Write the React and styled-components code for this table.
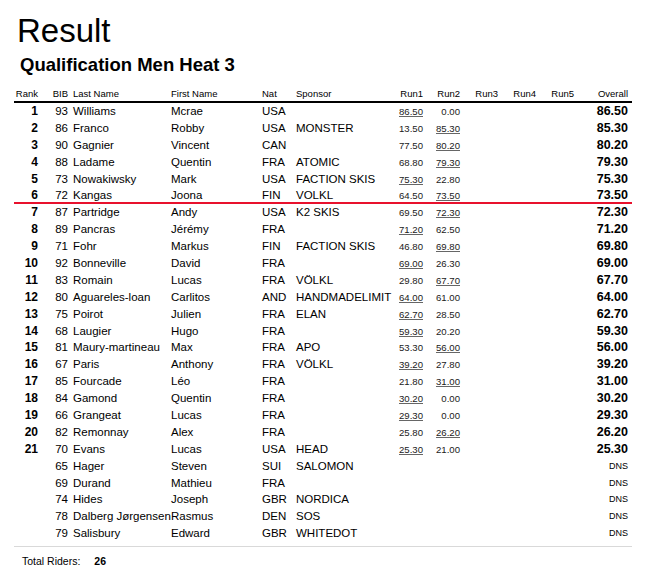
import React from 'react';
import styled, { createGlobalStyle } from 'styled-components';

const GlobalStyle = createGlobalStyle`
  html, body {
    margin: 0;
    padding: 0;
    background: #ffffff;
    color: #000000;
    font-family: 'Liberation Sans', Arial, Helvetica, sans-serif;
  }
`;

const COLS = '26px 30px 100px 90px 34px 102px 29px 37px 38px 38px 38px 56px';

const Page = styled.div`
  width: 655px;
  padding: 14px 0 0 14px;
  box-sizing: border-box;
`;

const Title = styled.h1`
  margin: 0 0 0 3px;
  font-size: 33px;
  line-height: 33px;
  font-weight: 400;
`;

const SubTitle = styled.h2`
  margin: 8px 0 0 6px;
  font-size: 18.5px;
  line-height: 20px;
  font-weight: 700;
`;

const Table = styled.div`
  width: 618px;
  margin-top: 13px;
  padding-bottom: 4px;
  border-bottom: 1px solid #d9d9d9;
`;

const HeadRow = styled.div`
  display: grid;
  grid-template-columns: ${COLS};
  height: 13px;
  border-bottom: 2px solid #000;
  font-size: 9.5px;
  line-height: 12px;
`;

const Row = styled.div`
  display: grid;
  grid-template-columns: ${COLS};
  height: 16.9px;
  box-sizing: border-box;
  line-height: 17px;
  font-size: 11.5px;
  white-space: nowrap;
  border-bottom: ${({ $cut }) => ($cut ? '2px solid #e8112d' : 'none')};
`;

const Cell = styled.div`
  text-align: ${({ $right }) => ($right ? 'right' : 'left')};
  padding-left: ${({ $pl }) => $pl || 0}px;
  padding-right: ${({ $pr }) => $pr || 0}px;
`;

const RankCell = styled(Cell)`
  font-weight: 700;
  font-size: 12px;
`;

const RunCell = styled(Cell)`
  font-size: 9.6px;
  color: #1a1a1a;
  span {
    text-decoration: ${({ $best }) => ($best ? 'underline' : 'none')};
    text-decoration-color: #666;
    text-underline-offset: 1px;
  }
`;

const OverallCell = styled(Cell)`
  font-size: ${({ $dns }) => ($dns ? '9px' : '12.5px')};
  font-weight: ${({ $dns }) => ($dns ? 400 : 700)};
`;

const Footer = styled.div`
  display: flex;
  gap: 14px;
  margin: 7px 0 0 8px;
  font-size: 10.5px;
  line-height: 14px;
  b {
    font-weight: 700;
  }
`;

const riders = [
  [1, 93, 'Williams', 'Mcrae', 'USA', '', '86.50', '0.00', 1, '86.50'],
  [2, 86, 'Franco', 'Robby', 'USA', 'MONSTER', '13.50', '85.30', 2, '85.30'],
  [3, 90, 'Gagnier', 'Vincent', 'CAN', '', '77.50', '80.20', 2, '80.20'],
  [4, 88, 'Ladame', 'Quentin', 'FRA', 'ATOMIC', '68.80', '79.30', 2, '79.30'],
  [5, 73, 'Nowakiwsky', 'Mark', 'USA', 'FACTION SKIS', '75.30', '22.80', 1, '75.30'],
  [6, 72, 'Kangas', 'Joona', 'FIN', 'VOLKL', '64.50', '73.50', 2, '73.50'],
  [7, 87, 'Partridge', 'Andy', 'USA', 'K2 SKIS', '69.50', '72.30', 2, '72.30'],
  [8, 89, 'Pancras', 'Jérémy', 'FRA', '', '71.20', '62.50', 1, '71.20'],
  [9, 71, 'Fohr', 'Markus', 'FIN', 'FACTION SKIS', '46.80', '69.80', 2, '69.80'],
  [10, 92, 'Bonneville', 'David', 'FRA', '', '69.00', '26.30', 1, '69.00'],
  [11, 83, 'Romain', 'Lucas', 'FRA', 'VÖLKL', '29.80', '67.70', 2, '67.70'],
  [12, 80, 'Aguareles-loan', 'Carlitos', 'AND', 'HANDMADELIMIT', '64.00', '61.00', 1, '64.00'],
  [13, 75, 'Poirot', 'Julien', 'FRA', 'ELAN', '62.70', '28.50', 1, '62.70'],
  [14, 68, 'Laugier', 'Hugo', 'FRA', '', '59.30', '20.20', 1, '59.30'],
  [15, 81, 'Maury-martineau', 'Max', 'FRA', 'APO', '53.30', '56.00', 2, '56.00'],
  [16, 67, 'Paris', 'Anthony', 'FRA', 'VÖLKL', '39.20', '27.80', 1, '39.20'],
  [17, 85, 'Fourcade', 'Léo', 'FRA', '', '21.80', '31.00', 2, '31.00'],
  [18, 84, 'Gamond', 'Quentin', 'FRA', '', '30.20', '0.00', 1, '30.20'],
  [19, 66, 'Grangeat', 'Lucas', 'FRA', '', '29.30', '0.00', 1, '29.30'],
  [20, 82, 'Remonnay', 'Alex', 'FRA', '', '25.80', '26.20', 2, '26.20'],
  [21, 70, 'Evans', 'Lucas', 'USA', 'HEAD', '25.30', '21.00', 1, '25.30'],
  ['', 65, 'Hager', 'Steven', 'SUI', 'SALOMON', '', '', 0, 'DNS'],
  ['', 69, 'Durand', 'Mathieu', 'FRA', '', '', '', 0, 'DNS'],
  ['', 74, 'Hides', 'Joseph', 'GBR', 'NORDICA', '', '', 0, 'DNS'],
  ['', 78, 'Dalberg Jørgensen', 'Rasmus', 'DEN', 'SOS', '', '', 0, 'DNS'],
  ['', 79, 'Salisbury', 'Edward', 'GBR', 'WHITEDOT', '', '', 0, 'DNS'],
];

const App = () => {
  return (
    <Page>
      <GlobalStyle />
      <Title>Result</Title>
      <SubTitle>Qualification Men Heat 3</SubTitle>
      <Table>
        <HeadRow>
          <Cell $right $pr={2}>Rank</Cell>
          <Cell $right $pr={2}>BIB</Cell>
          <Cell $pl={3}>Last Name</Cell>
          <Cell $pl={1}>First Name</Cell>
          <Cell $pl={2}>Nat</Cell>
          <Cell $pl={2}>Sponsor</Cell>
          <Cell $right $pr={2}>Run1</Cell>
          <Cell $right $pr={2}>Run2</Cell>
          <Cell $right $pr={2}>Run3</Cell>
          <Cell $right $pr={2}>Run4</Cell>
          <Cell $right $pr={2}>Run5</Cell>
          <Cell $right $pr={4}>Overall</Cell>
        </HeadRow>
        {riders.map((r) => (
          <Row key={r[1]} $cut={r[0] === 6}>
            <RankCell $right $pr={2}>{r[0]}</RankCell>
            <Cell $right $pr={2}>{r[1]}</Cell>
            <Cell $pl={3}>{r[2]}</Cell>
            <Cell $pl={1}>{r[3]}</Cell>
            <Cell $pl={2}>{r[4]}</Cell>
            <Cell $pl={2}>{r[5]}</Cell>
            <RunCell $right $pr={2} $best={r[8] === 1}><span>{r[6]}</span></RunCell>
            <RunCell $right $pr={2} $best={r[8] === 2}><span>{r[7]}</span></RunCell>
            <Cell />
            <Cell />
            <Cell />
            <OverallCell $right $pr={4} $dns={r[9] === 'DNS'}>{r[9]}</OverallCell>
          </Row>
        ))}
      </Table>
      <Footer>
        <span>Total Riders:</span>
        <b>26</b>
      </Footer>
    </Page>
  );
};

export default App;
